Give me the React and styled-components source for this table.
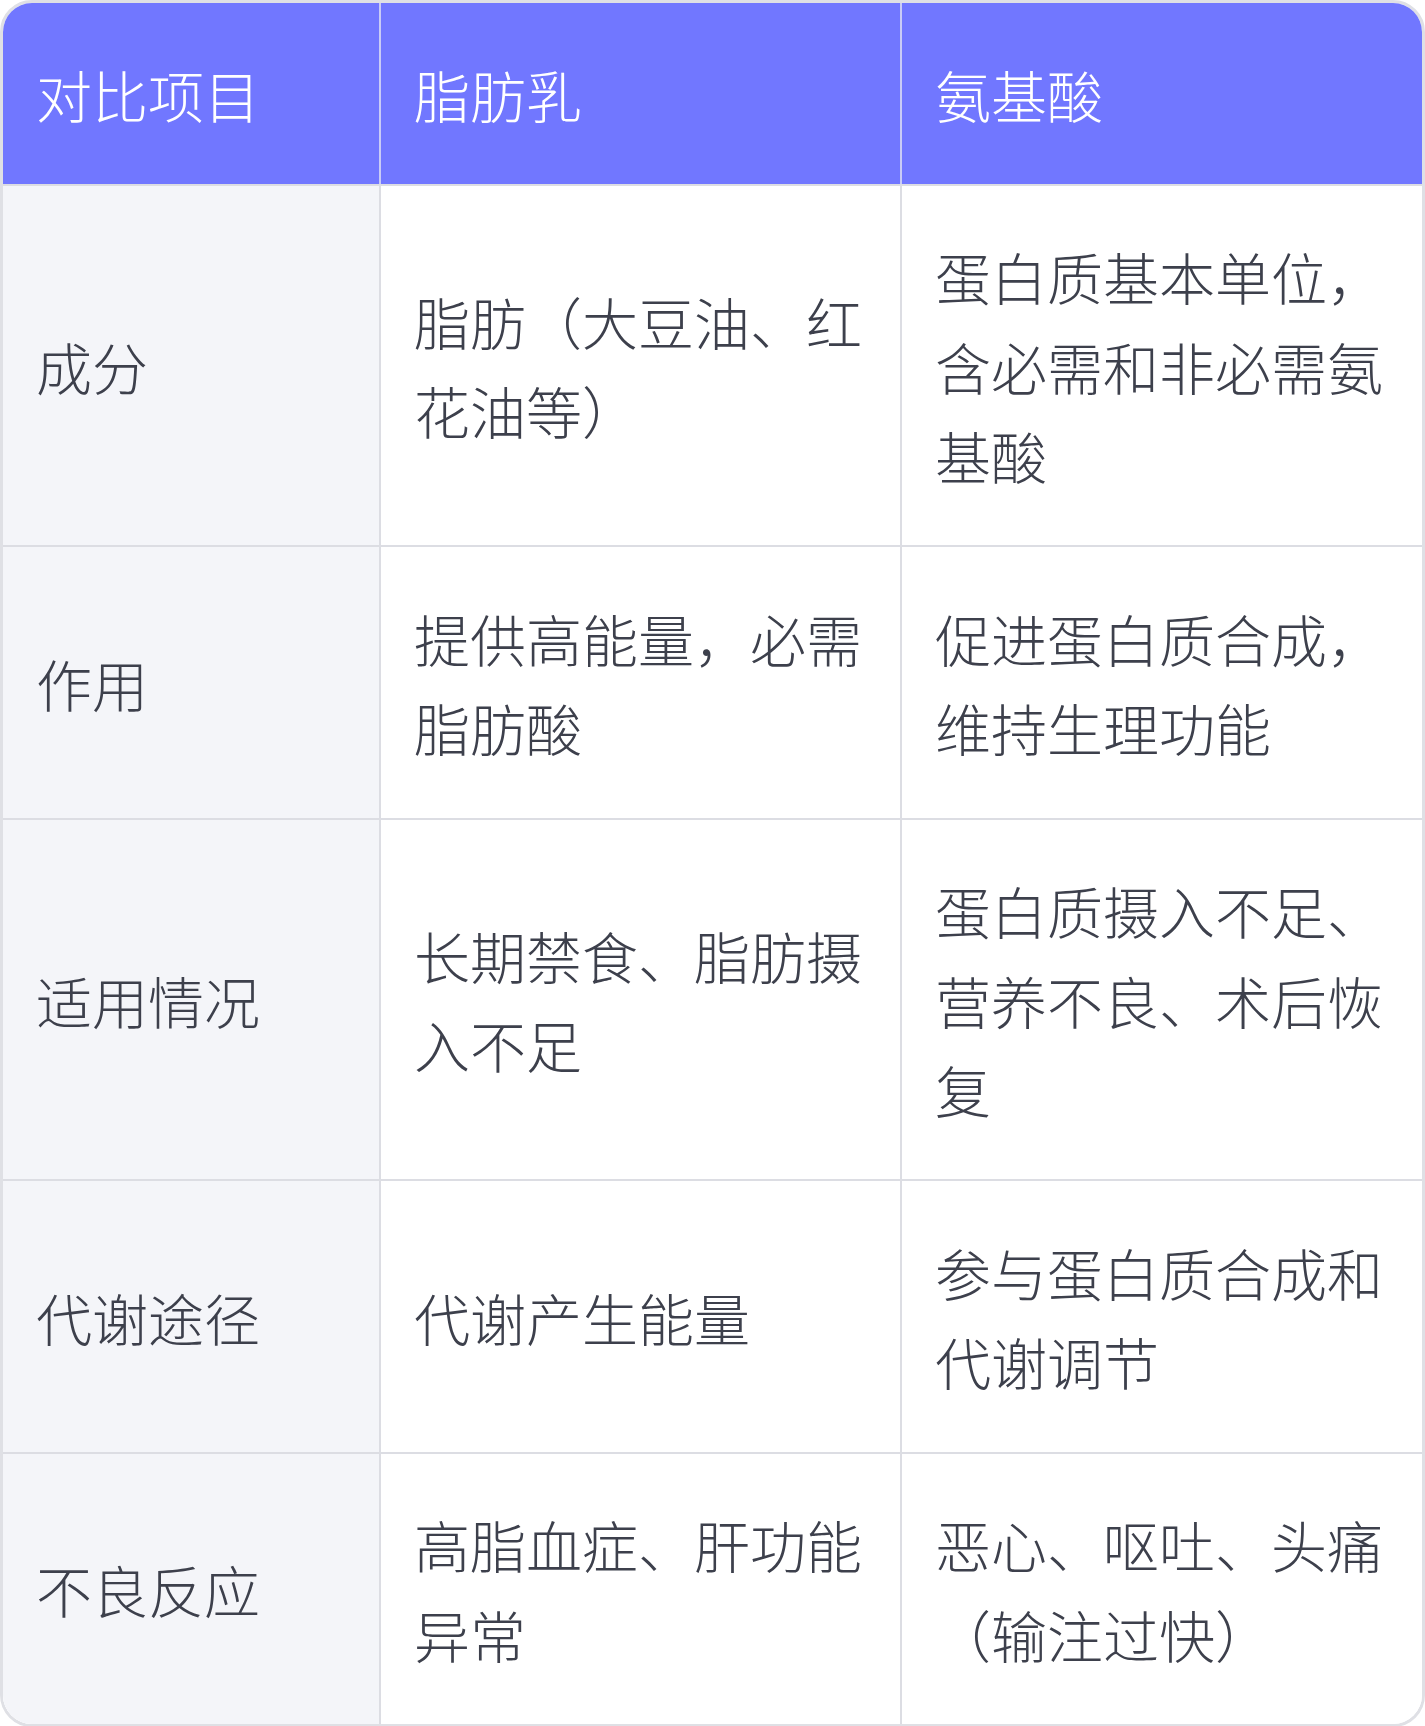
import * as React from 'react';
import styled, { createGlobalStyle } from 'styled-components';

const GlobalStyle = createGlobalStyle`
    html, body {
        margin: 0;
        padding: 0;
        background: #ffffff;
    }
    body {
        font-family: "Noto Sans CJK SC", "Noto Sans", sans-serif;
        -webkit-font-smoothing: antialiased;
    }
`;

const TableFrame = styled.div`
    width: 1425px;
    box-sizing: border-box;
    border: 3px solid #dfe0e5;
    border-radius: 32px;
    overflow: hidden;
    background: #ffffff;
`;

const Row = styled.div`
    display: grid;
    grid-template-columns: 376px 521px 522px;
    border-top: ${p => (p.$head ? 'none' : '2px solid #dcdde3')};
    background: ${p => (p.$head ? '#7177ff' : '#ffffff')};
`;

const Cell = styled.div`
    display: flex;
    align-items: center;
    box-sizing: border-box;
    padding: 45.5px 34px 45.5px 33px;
    font-size: 56px;
    line-height: 1.6;
    font-weight: 200;
    color: ${p => (p.$head ? '#ffffff' : '#3d404c')};
    background: ${p => (p.$label && !p.$head ? '#f4f5f9' : 'transparent')};
    border-left: ${p =>
        p.$label ? 'none' : p.$head ? '2px solid #c9cbf6' : '2px solid #dcdde3'};
    word-break: break-all;
`;

const rows = [
    ['成分', '脂肪（大豆油、红花油等）', '蛋白质基本单位，含必需和非必需氨基酸'],
    ['作用', '提供高能量，必需脂肪酸', '促进蛋白质合成，维持生理功能'],
    ['适用情况', '长期禁食、脂肪摄入不足', '蛋白质摄入不足、营养不良、术后恢复'],
    ['代谢途径', '代谢产生能量', '参与蛋白质合成和代谢调节'],
    ['不良反应', '高脂血症、肝功能异常', '恶心、呕吐、头痛（输注过快）'],
];

const App = () => {
    return (
        <>
            <GlobalStyle />
            <TableFrame>
                <Row $head>
                    <Cell $head $label>对比项目</Cell>
                    <Cell $head>脂肪乳</Cell>
                    <Cell $head>氨基酸</Cell>
                </Row>
                {rows.map(r => (
                    <Row key={r[0]}>
                        <Cell $label>{r[0]}</Cell>
                        <Cell>{r[1]}</Cell>
                        <Cell>{r[2]}</Cell>
                    </Row>
                ))}
            </TableFrame>
        </>
    );
};

export default App;
